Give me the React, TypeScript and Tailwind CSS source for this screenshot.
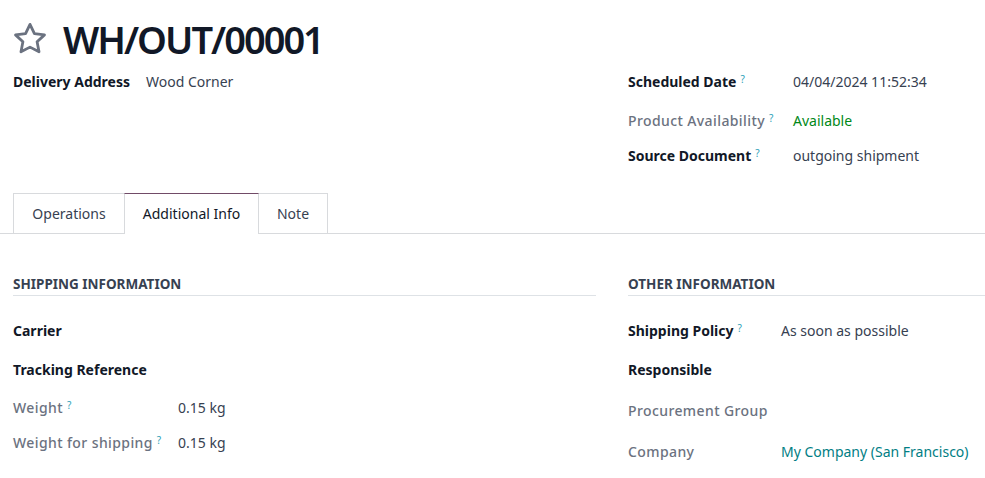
import React from "react";

const Q = () => (
  <sup className="ml-[4px] text-[10px] font-normal tracking-normal text-[#2d9fb8] relative -top-[4px]">?</sup>
);

function Row({
  label,
  value,
  bold = true,
  help = false,
  h,
  labelW,
  valueClass = "text-[#374151]",
}: {
  label: string;
  value?: React.ReactNode;
  bold?: boolean;
  help?: boolean;
  h: number;
  labelW: string;
  valueClass?: string;
}) {
  return (
    <div className="flex items-center" style={{ height: h }}>
      <div
        className={`${labelW} shrink-0 ${
          bold ? "font-bold text-[#111827]" : "font-medium tracking-[0.4px] text-[#6b7280]"
        }`}
      >
        {label}
        {help && <Q />}
      </div>
      <div className={valueClass}>{value}</div>
    </div>
  );
}

export default function App() {
  return (
    <div
      className="w-[985px] h-[478px] overflow-hidden bg-white text-[14px] leading-[20px] text-[#374151]"
      style={{ fontFamily: '"Noto Sans", "Open Sans", sans-serif' }}
    >
      {/* Title */}
      <div className="flex items-center pl-[12px] pt-[17px] h-[60px]">
        <svg width="36" height="34" viewBox="0 0 24 23" className="shrink-0">
          <path
            d="M12 1.6l3 6.2 6.8.9-5 4.7 1.3 6.8L12 17l-6.1 3.2 1.3-6.8-5-4.7 6.8-.9z"
            fill="none"
            stroke="#6b7280"
            strokeWidth="1.9"
            strokeLinejoin="round"
          />
        </svg>
        <h1 className="ml-[15px] text-[38px] leading-[44px] font-semibold text-[#111827] tracking-[-2px]">
          WH/OUT/00001
        </h1>
      </div>

      {/* Top fields */}
      <div className="grid grid-cols-[583px_1fr] gap-x-[32px] pl-[13px] h-[133px]">
        <div className="pt-[3px]">
          <Row label="Delivery Address" value="Wood Corner" h={38} labelW="w-[133px]" />
        </div>
        <div className="pt-[3px]">
          <Row label="Scheduled Date" help value="04/04/2024 11:52:34" h={38} labelW="w-[165px]" />
          <Row
            label="Product Availability"
            bold={false}
            help
            value="Available"
            valueClass="text-[#008818]"
            h={40}
            labelW="w-[165px]"
          />
          <Row label="Source Document" help value="outgoing shipment" h={30} labelW="w-[165px]" />
        </div>
      </div>

      {/* Tabs */}
      <div className="flex border-b border-[#d8dadd] pl-[13px] h-[41px]">
        <div className="w-[111px] h-[41px] flex items-center justify-center border-l border-t border-[#d8dadd] text-[#374151]">
          Operations
        </div>
        <div className="w-[135px] h-[41px] -mb-px bg-white flex items-center justify-center border-t border-l border-r border-t-[#714b67] border-l-[#d8dadd] border-r-[#d8dadd] text-[#111827]">
          Additional Info
        </div>
        <div className="w-[69px] h-[41px] flex items-center justify-center border-t border-r border-[#d8dadd] text-[#374151]">
          Note
        </div>
      </div>

      {/* Bottom sections */}
      <div className="grid grid-cols-[583px_1fr] gap-x-[32px] pl-[13px] pt-[40px]">
        <div>
          <div className="font-bold uppercase text-[13.5px] text-[#374151] h-[22px] flex items-center border-b border-[#dee2e6] pb-[2px]">
            Shipping Information
          </div>
          <div className="pt-[15px]">
            <Row label="Carrier" h={39} labelW="w-[165px]" />
            <Row label="Tracking Reference" h={39} labelW="w-[165px]" />
            <Row label="Weight" bold={false} help value="0.15 kg" h={37} labelW="w-[165px]" />
            <Row label="Weight for shipping" bold={false} help value="0.15 kg" h={33} labelW="w-[165px]" />
          </div>
        </div>
        <div>
          <div className="font-bold uppercase text-[13.5px] text-[#374151] h-[22px] flex items-center border-b border-[#dee2e6] pb-[2px]">
            Other Information
          </div>
          <div className="pt-[15px]">
            <Row label="Shipping Policy" help value="As soon as possible" h={39} labelW="w-[153px]" />
            <Row label="Responsible" h={39} labelW="w-[153px]" />
            <Row label="Procurement Group" bold={false} h={43} labelW="w-[153px]" />
            <Row
              label="Company"
              bold={false}
              value="My Company (San Francisco)"
              valueClass="text-[#017e84]"
              h={40}
              labelW="w-[153px]"
            />
          </div>
        </div>
      </div>
    </div>
  );
}
